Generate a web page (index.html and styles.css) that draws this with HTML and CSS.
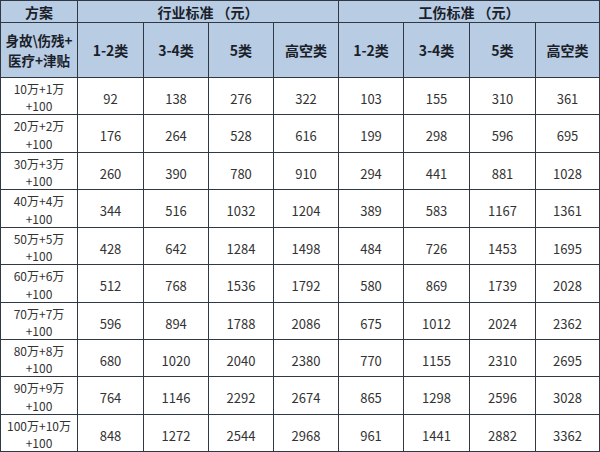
FILE: index.html
```html
<!DOCTYPE html>
<html lang="zh">
<head>
<meta charset="utf-8">
<link rel="stylesheet" href="styles.css">
</head>
<body>
<div class="sheet">
  <div class="hd r1">方案</div>
  <div class="hd r1 span4">行业标准 （元）</div>
  <div class="hd r1 span4">工伤标准 （元）</div>

  <div class="hd r2 two">身故\伤残+<br>医疗+津贴</div>
  <div class="hd r2">1-2类</div>
  <div class="hd r2">3-4类</div>
  <div class="hd r2">5类</div>
  <div class="hd r2">高空类</div>
  <div class="hd r2">1-2类</div>
  <div class="hd r2">3-4类</div>
  <div class="hd r2">5类</div>
  <div class="hd r2">高空类</div>

  <div class="c plan">10万+1万<br>+100</div><div class="c">92</div><div class="c">138</div><div class="c">276</div><div class="c">322</div><div class="c">103</div><div class="c">155</div><div class="c">310</div><div class="c">361</div>
  <div class="c plan">20万+2万<br>+100</div><div class="c">176</div><div class="c">264</div><div class="c">528</div><div class="c">616</div><div class="c">199</div><div class="c">298</div><div class="c">596</div><div class="c">695</div>
  <div class="c plan">30万+3万<br>+100</div><div class="c">260</div><div class="c">390</div><div class="c">780</div><div class="c">910</div><div class="c">294</div><div class="c">441</div><div class="c">881</div><div class="c">1028</div>
  <div class="c plan">40万+4万<br>+100</div><div class="c">344</div><div class="c">516</div><div class="c">1032</div><div class="c">1204</div><div class="c">389</div><div class="c">583</div><div class="c">1167</div><div class="c">1361</div>
  <div class="c plan">50万+5万<br>+100</div><div class="c">428</div><div class="c">642</div><div class="c">1284</div><div class="c">1498</div><div class="c">484</div><div class="c">726</div><div class="c">1453</div><div class="c">1695</div>
  <div class="c plan">60万+6万<br>+100</div><div class="c">512</div><div class="c">768</div><div class="c">1536</div><div class="c">1792</div><div class="c">580</div><div class="c">869</div><div class="c">1739</div><div class="c">2028</div>
  <div class="c plan">70万+7万<br>+100</div><div class="c">596</div><div class="c">894</div><div class="c">1788</div><div class="c">2086</div><div class="c">675</div><div class="c">1012</div><div class="c">2024</div><div class="c">2362</div>
  <div class="c plan">80万+8万<br>+100</div><div class="c">680</div><div class="c">1020</div><div class="c">2040</div><div class="c">2380</div><div class="c">770</div><div class="c">1155</div><div class="c">2310</div><div class="c">2695</div>
  <div class="c plan">90万+9万<br>+100</div><div class="c">764</div><div class="c">1146</div><div class="c">2292</div><div class="c">2674</div><div class="c">865</div><div class="c">1298</div><div class="c">2596</div><div class="c">3028</div>
  <div class="c plan">100万+10万<br>+100</div><div class="c">848</div><div class="c">1272</div><div class="c">2544</div><div class="c">2968</div><div class="c">961</div><div class="c">1441</div><div class="c">2882</div><div class="c">3362</div>
</div>
</body>
</html>
```

FILE: styles.css
```css
html, body {
  margin: 0;
  padding: 0;
  background: #ffffff;
}

.sheet {
  width: 600px;
  height: 452px;
  box-sizing: border-box;
  padding: 1px;
  background: #2f3843;
  display: grid;
  gap: 1px;
  grid-template-columns: 76px 65px 64px 64px 64px 64px 65px 65px 63px;
  grid-template-rows: 21px 54px 36px 37px 36px 37px 36px 37px 36px 36px 37px 36px;
  font-family: "Noto Sans CJK SC", "Noto Sans", sans-serif;
}

.hd {
  background: #b8cce4;
  color: #1b1f2a;
  font-weight: bold;
  font-size: 14px;
  display: flex;
  align-items: center;
  justify-content: center;
  text-align: center;
}

.r1 {
  line-height: 18px;
}

.span4 {
  grid-column: span 4;
}

.two {
  font-size: 13.5px;
  line-height: 20px;
}

.c {
  background: #ffffff;
  color: #333333;
  font-size: 13px;
  display: flex;
  align-items: center;
  justify-content: center;
  text-align: center;
  padding-top: 4px;
  box-sizing: border-box;
}

.plan {
  font-size: 12px;
  line-height: 17.5px;
  padding-top: 2px;
}
```
